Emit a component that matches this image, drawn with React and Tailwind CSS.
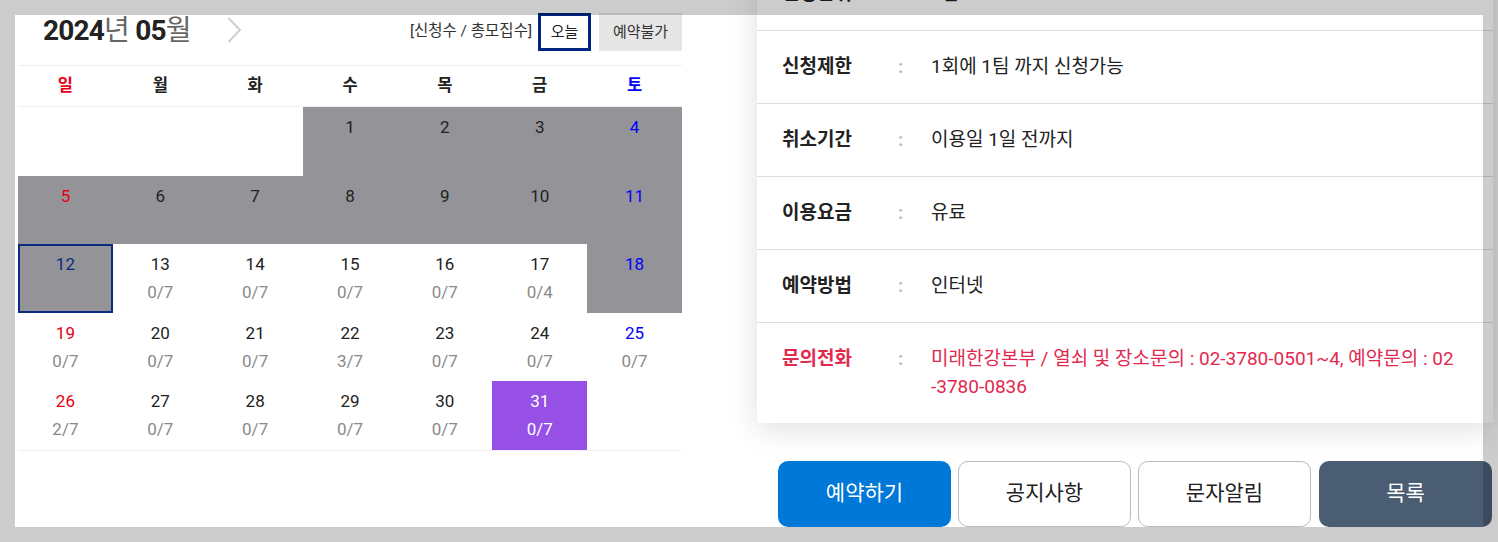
import React from 'react'

const font = { fontFamily: '"Roboto", "Noto Sans CJK KR", sans-serif' }

const weekdays = ['일', '월', '화', '수', '목', '금', '토']

// type: 'closed' | 'today' | 'selected', c = 신청수/총모집수
const weeks = [
  [null, null, null, { d: 1, t: 'closed' }, { d: 2, t: 'closed' }, { d: 3, t: 'closed' }, { d: 4, t: 'closed' }],
  [
    { d: 5, t: 'closed' },
    { d: 6, t: 'closed' },
    { d: 7, t: 'closed' },
    { d: 8, t: 'closed' },
    { d: 9, t: 'closed' },
    { d: 10, t: 'closed' },
    { d: 11, t: 'closed' },
  ],
  [
    { d: 12, t: 'today' },
    { d: 13, c: '0/7' },
    { d: 14, c: '0/7' },
    { d: 15, c: '0/7' },
    { d: 16, c: '0/7' },
    { d: 17, c: '0/4' },
    { d: 18, t: 'closed' },
  ],
  [
    { d: 19, c: '0/7' },
    { d: 20, c: '0/7' },
    { d: 21, c: '0/7' },
    { d: 22, c: '3/7' },
    { d: 23, c: '0/7' },
    { d: 24, c: '0/7' },
    { d: 25, c: '0/7' },
  ],
  [
    { d: 26, c: '2/7' },
    { d: 27, c: '0/7' },
    { d: 28, c: '0/7' },
    { d: 29, c: '0/7' },
    { d: 30, c: '0/7' },
    { d: 31, c: '0/7', t: 'selected' },
    null,
  ],
]

const infoRows = [
  { label: '신청제한', value: '1회에 1팀 까지 신청가능' },
  { label: '취소기간', value: '이용일 1일 전까지' },
  { label: '이용요금', value: '유료' },
  { label: '예약방법', value: '인터넷' },
]

function DayCell({ cell, col }) {
  if (!cell) return <div className="h-[68.6px]" />

  const closed = cell.t === 'closed' || cell.t === 'today'
  const selected = cell.t === 'selected'

  let numColor = 'text-[#222]'
  if (col === 0) numColor = 'text-[#e60012]'
  if (col === 6) numColor = 'text-[#0000ff]'
  if (cell.t === 'today') numColor = 'text-[#0a2a80]'
  if (selected) numColor = 'text-white'

  let bg = 'bg-white'
  if (closed) bg = 'bg-[#939398]'
  if (selected) bg = 'bg-[#9650e6]'

  return (
    <div
      className={`h-[68.6px] flex flex-col items-center text-[17px] leading-[20px] ${bg} ${
        cell.t === 'today' ? 'border-2 border-[#0a2a80] pt-[8px]' : 'pt-[10px]'
      }`}
    >
      <span className={numColor}>{cell.d}</span>
      {cell.c && <span className={`mt-[8px] ${selected ? 'text-white' : 'text-[#8a8a8a]'}`}>{cell.c}</span>}
    </div>
  )
}

function Calendar() {
  return (
    <div className="ml-[18px] w-[664px] shrink-0">
      <div className="h-[65px] flex items-start">
        <div className="pl-[25px] pt-[14px] text-[28px] leading-[34px] tracking-[-0.8px] whitespace-nowrap">
          <span className="font-bold text-[#222]">2024</span>
          <span className="text-[#666]">년 </span>
          <span className="font-bold text-[#222]">05</span>
          <span className="text-[#666]">월</span>
        </div>
        <svg className="ml-[36px] mt-[17px]" width="15" height="26" viewBox="0 0 15 26" fill="none">
          <polyline points="1.5,1 13,13 1.5,25" stroke="#cfcfcf" strokeWidth="2" />
        </svg>
        <div className="ml-auto mt-[13px] flex items-center">
          <span className="text-[15.5px] text-[#333] mr-[6px] whitespace-nowrap">[신청수 / 총모집수]</span>
          <div className="w-[53px] h-[38px] border-[3px] border-[#002580] flex items-center justify-center text-[15px] text-[#222]">
            오늘
          </div>
          <div className="ml-[8px] w-[83px] h-[38px] bg-[#e6e6e6] flex items-center justify-center text-[15px] text-[#333]">
            예약불가
          </div>
        </div>
      </div>

      <div className="grid grid-cols-7 h-[42px] border-t border-b border-[#eee] items-center text-[16.5px] font-semibold">
        {weekdays.map((w, i) => (
          <div
            key={w}
            className={`text-center ${i === 0 ? 'text-[#e60012]' : i === 6 ? 'text-[#0000ff]' : 'text-[#222]'}`}
          >
            {w}
          </div>
        ))}
      </div>

      <div className="border-b border-[#eee]">
        {weeks.map((week, wi) => (
          <div key={wi} className="grid grid-cols-7">
            {week.map((cell, ci) => (
              <DayCell key={ci} cell={cell} col={ci} />
            ))}
          </div>
        ))}
      </div>
    </div>
  )
}

function InfoRow({ label, value, red, last }) {
  return (
    <div
      className={`flex items-start py-[22px] leading-[28px] text-[19px] pl-[25px] ${
        last ? '' : 'border-b border-[#ddd]'
      }`}
    >
      <span className={`w-[116px] shrink-0 font-bold ${red ? 'text-[#e2294f]' : 'text-[#222]'}`}>{label}</span>
      <span className="w-[33px] shrink-0 font-bold text-[#bbb]">:</span>
      <span className={`w-[524px] break-all ${red ? 'text-[#e2294f]' : 'text-[#222]'}`}>{value}</span>
    </div>
  )
}

function Details() {
  return (
    <div className="ml-[75px] w-[736px] shrink-0 flex flex-col">
      <div className="bg-white shadow-[0_6px_28px_rgba(0,0,0,0.13)] -mt-[42px]">
        <InfoRow label="신청단위" value="1팀" />
        {infoRows.map((r) => (
          <InfoRow key={r.label} label={r.label} value={r.value} />
        ))}
        <InfoRow
          label="문의전화"
          value="미래한강본부 / 열쇠 및 장소문의 : 02-3780-0501~4, 예약문의 : 02-3780-0836"
          red
          last
        />
      </div>
      <div className="mt-[38px] ml-[21px] flex gap-[7px]">
        <button className="w-[173px] h-[66px] rounded-[10px] bg-[#0078d7] text-white text-[21px]">예약하기</button>
        <button className="w-[173px] h-[66px] rounded-[10px] bg-white border border-[#bbb] text-[#222] text-[21px]">
          공지사항
        </button>
        <button className="w-[173px] h-[66px] rounded-[10px] bg-white border border-[#bbb] text-[#222] text-[21px]">
          문자알림
        </button>
        <button className="ml-[1px] w-[173px] h-[66px] rounded-[10px] bg-[#4a5d73] text-white text-[21px]">목록</button>
      </div>
    </div>
  )
}

export default function App() {
  return (
    <div className="relative w-[1498px] h-[542px] bg-white overflow-hidden" style={font}>
      <div className="flex">
        <Calendar />
        <Details />
      </div>
      <div className="absolute inset-0 pointer-events-none border-[15px] border-[rgba(0,0,0,0.2)]" />
    </div>
  )
}
